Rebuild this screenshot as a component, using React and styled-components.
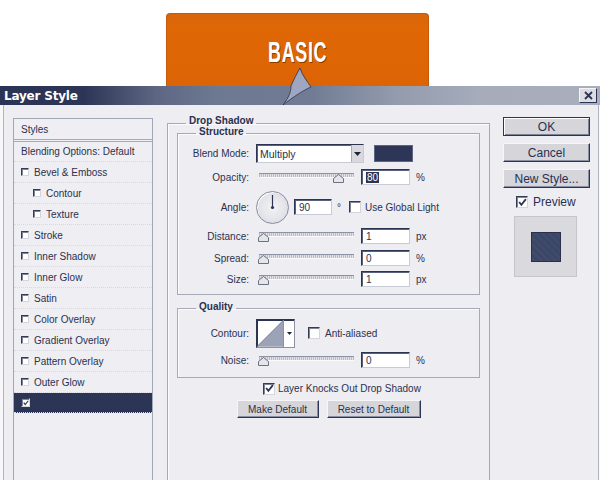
import React from 'react'
import styled, { createGlobalStyle } from 'styled-components'

const GlobalStyle = createGlobalStyle`
  html, body { margin: 0; padding: 0; background: #fff; }
  body { font-family: "Liberation Sans", Arial, sans-serif; color: #2a3150; }
  * { box-sizing: border-box; }
`

const layerItems = [
  { label: 'Bevel & Emboss' },
  { label: 'Contour', indent: true },
  { label: 'Texture', indent: true },
  { label: 'Stroke' },
  { label: 'Inner Shadow' },
  { label: 'Inner Glow' },
  { label: 'Satin' },
  { label: 'Color Overlay' },
  { label: 'Gradient Overlay' },
  { label: 'Pattern Overlay' },
  { label: 'Outer Glow' },
]

const Page = styled.div`
  position: relative;
  width: 600px;
  height: 480px;
  overflow: hidden;
`

const Header = styled.div`
  height: 86px;
  padding: 13px 0 0 166px;
`

const Tab = styled.div`
  width: 263px;
  height: 73px;
  border: 1px solid #c25a10;
  border-bottom: none;
  border-radius: 4px 4px 0 0;
  background: linear-gradient(180deg, #d9660c 0%, #df6705 18%, #dd6404 100%);
  display: flex;
  justify-content: center;
  padding-top: 24px;
`

const TabTitle = styled.span`
  display: inline-block;
  font-family: "Liberation Sans", Arial, sans-serif;
  font-weight: bold;
  font-size: 29px;
  line-height: 1;
  color: #fff;
  letter-spacing: 1px;
  transform: scaleX(0.62);
  text-shadow: 1px 1px 0 #8a3a00;
`

const Pointer = styled.svg`
  position: absolute;
  left: 280px;
  top: 64px;
`

const TitleBar = styled.div`
  height: 19px;
  display: flex;
  align-items: center;
  justify-content: space-between;
  padding: 0 3px 0 4px;
  background: linear-gradient(90deg, #2b3454 0%, #2c3555 14%, #5d6784 26%, #6d7891 36%, #717c94 52%, #939bad 66%, #a6acba 80%, #a9aebc 100%);
`

const Title = styled.span`
  color: #fff;
  font-weight: bold;
  font-size: 12px;
  font-family: "DejaVu Sans", "Liberation Sans", sans-serif;
  letter-spacing: -0.2px;
`

const CloseBox = styled.div`
  width: 18px;
  height: 15px;
  background: #dcdce2;
  border: 1px solid;
  border-color: #f4f4f6 #2b3454 #2b3454 #f4f4f6;
  display: flex;
  align-items: center;
  justify-content: center;
`

const Body = styled.div`
  display: flex;
  align-items: flex-start;
  height: 375px;
  overflow: hidden;
  padding: 12px 0 0 13px;
  background: #eeedf1;
  box-shadow: inset 3px 0 0 #f8f8fa, inset 4px 0 0 #b0b4c2, inset -1px 0 0 #fafafa, inset -2px 0 0 #b0b4c2;
`

const StylesPanel = styled.div`
  width: 140px;
  height: 380px;
  margin: 1px 14px 0 0;
  border: 1px solid #a2a7b6;
  background: #efeef2;
  font-size: 10px;
`

const PanelRow = styled.div`
  height: ${({ h }) => h || 21}px;
  display: flex;
  align-items: center;
  gap: 5px;
  padding-left: ${({ indent }) => (indent ? 19 : 7)}px;
  border-bottom: ${({ double }) => (double ? '3px double #a8acba' : '1px dotted #d8d8e0')};
  background: ${({ selected }) => (selected ? '#2d3556' : 'transparent')};
  color: #2a3150;
  white-space: nowrap;
`

const Box = styled.span`
  display: inline-flex;
  align-items: center;
  justify-content: center;
  flex: none;
  width: ${({ size }) => size}px;
  height: ${({ size }) => size}px;
  background: #fff;
  border: 1px solid;
  border-color: #343b52 #d4d4dc #d4d4dc #343b52;
  box-shadow: inset 1px 1px 0 #7d8498;
`

const Check = ({ size = 11, checked }) => (
  <Box size={size}>
    {checked && (
      <svg width={size - 3} height={size - 3} viewBox="0 0 8 8">
        <path d="M1 3.5 L3 6 L7 1" fill="none" stroke="#2b3454" strokeWidth="1.6" />
      </svg>
    )}
  </Box>
)

const Center = styled.div`
  width: 323px;
  flex: none;
`

const Group = styled.fieldset`
  margin: ${({ mt }) => mt || 0}px 0 0 0;
  padding: 0 ${({ px }) => px || 0}px ${({ pb }) => pb || 0}px;
  min-width: 0;
  height: ${({ h }) => (h ? `${h}px` : 'auto')};
  border: 1px solid #a6aab8;
  box-shadow: inset 1px 1px 0 #fbfbfd;
`

const Legend = styled.legend`
  margin-left: ${({ ml }) => ml}px;
  padding: 0 3px ${({ pb }) => pb || 2}px;
  font-size: 10px;
  font-weight: bold;
  line-height: 8px;
  color: #2a3150;
  white-space: nowrap;
`

const Row = styled.div`
  height: ${({ h }) => h}px;
  display: flex;
  align-items: center;
  font-size: 10px;
  padding-left: ${({ pl }) => pl || 0}px;
  white-space: nowrap;
`

const Label = styled.span`
  width: 71px;
  text-align: right;
  margin-right: 7px;
  color: #2a3150;
`

const Select = styled.div`
  width: 108px;
  height: 19px;
  display: flex;
  align-items: center;
  justify-content: space-between;
  background: #fff;
  border: 1px solid;
  border-color: #2c3454 #c8cad4 #c8cad4 #2c3454;
  box-shadow: inset 1px 1px 0 #59617c;
  padding-left: 3px;
  font-size: 10.5px;
`

const SelectArrow = styled.span`
  width: 12px;
  height: 17px;
  background: #d8d8dd;
  border-left: 1px solid #a8acba;
  display: flex;
  align-items: center;
  justify-content: center;
`

const Swatch = styled.div`
  width: 39px;
  height: 17px;
  margin-left: 10px;
  background: #2e3658;
  border: 1px solid #5c6480;
`

const Track = styled.div`
  position: relative;
  width: 95px;
  height: 4px;
  margin: -4px 0 0 3px;
  border-top: 1px solid #8d93a5;
  background: repeating-linear-gradient(90deg, #b8bcc8 0 1px, #e2e2e8 1px 2px);
  box-shadow: 0 1px 0 #fafafc;
`

const Thumb = styled.svg`
  position: absolute;
  top: 0px;
`

const Slider = ({ at = 0 }) => (
  <Track>
    <Thumb width="11" height="9" viewBox="0 0 11 9" style={{ left: at - 3 }}>
      <path d="M5.5 0.5 L10.5 4.5 L10.5 8.5 L0.5 8.5 L0.5 4.5 Z" fill="#e6e6ea" stroke="#6c7284" />
    </Thumb>
  </Track>
)

const Field = styled.div`
  width: ${({ w }) => w}px;
  height: 16px;
  margin-left: ${({ ml }) => ml}px;
  display: flex;
  align-items: center;
  padding-left: 4px;
  background: #fff;
  border: 1px solid;
  border-color: #2c3454 #c8cad4 #c8cad4 #2c3454;
  box-shadow: inset 1px 1px 0 #59617c;
  font-size: 10px;
  color: #2a3150;
`

const Highlight = styled.span`
  background: #2d3556;
  color: #fff;
  padding: 0 1px;
`

const Unit = styled.span`
  margin-left: ${({ ml }) => ml || 6}px;
  color: #2a3150;
`

const Dial = styled.div`
  position: relative;
  width: 33px;
  height: 33px;
  border-radius: 50%;
  border: 1px solid #878da0;
  background: radial-gradient(circle at 50% 50%, #f4f4f6 0%, #e2e2e8 60%, #d4d5dc 100%);
  box-shadow: inset 1px 1px 0 #fff;
`

const DialHand = styled.svg`
  position: absolute;
  left: 0;
  top: 0;
`

const CheckLabel = styled.span`
  margin-left: ${({ ml }) => ml || 4}px;
  display: inline-flex;
  align-items: center;
  gap: ${({ gap }) => gap || 4}px;
  color: #2a3150;
`

const ContourBox = styled.div`
  width: 39px;
  height: 29px;
  display: flex;
  border: 1px solid;
  border-color: #2c3454 #8c92a4 #8c92a4 #2c3454;
  box-shadow: inset 1px 1px 0 #2c3454;
  background: #fff;
`

const ContourArrow = styled.span`
  width: 11px;
  border-left: 1px solid #8c92a4;
  display: flex;
  align-items: center;
  justify-content: center;
`

const ButtonsRow = styled.div`
  display: flex;
  justify-content: center;
  gap: 8px;
  margin-top: 1px;
`

const Btn = styled.div`
  width: ${({ w }) => w}px;
  height: ${({ h }) => h || 18}px;
  display: flex;
  align-items: center;
  justify-content: center;
  background: #d5d5da;
  border: 1px solid;
  border-color: ${({ primary }) => (primary ? '#2b3454' : '#f6f6f8 #2b3454 #2b3454 #f6f6f8')};
  box-shadow: ${({ primary }) => (primary ? 'inset 1px 1px 0 #fff, inset -1px -1px 0 #7c8296' : 'inset -1px -1px 0 #8a90a4')};
  font-size: ${({ fs }) => fs || 10}px;
  color: #2a3150;
  white-space: nowrap;
`

const Side = styled.div`
  width: 87px;
  flex: none;
  margin-left: 13px;
  display: flex;
  flex-direction: column;
  gap: 7px;
`

const PreviewRow = styled.div`
  height: 20px;
  display: flex;
  align-items: center;
  gap: 5px;
  padding-left: 13px;
  margin-top: -3px;
  font-size: 12px;
  color: #2a3150;
`

const PreviewBox = styled.div`
  width: 63px;
  height: 61px;
  margin: -3px 0 0 11px;
  background: #d9d9de;
  border: 1px solid #c4c6ce;
  display: flex;
  align-items: center;
  justify-content: center;
`

const PreviewSwatch = styled.div`
  width: 30px;
  height: 30px;
  border: 1px solid #28304c;
  background: repeating-linear-gradient(45deg, #3c4a6c 0 2px, #4a4a66 2px 3px, #384668 3px 5px);
`

export default function App() {
  return (
    <Page>
      <GlobalStyle />
      <Header>
        <Tab>
          <TabTitle>BASIC</TabTitle>
        </Tab>
      </Header>
      <TitleBar>
        <Title>Layer Style</Title>
        <CloseBox>
          <svg width="9" height="9" viewBox="0 0 9 9">
            <path d="M1 1 L8 8 M8 1 L1 8" stroke="#2b3454" strokeWidth="1.8" />
          </svg>
        </CloseBox>
      </TitleBar>
      <Body>
        <StylesPanel>
          <PanelRow h={23} double>Styles</PanelRow>
          <PanelRow h={20}>Blending Options: Default</PanelRow>
          {layerItems.map((item) => (
            <PanelRow key={item.label} indent={item.indent}>
              <Check size={8} />
              {item.label}
            </PanelRow>
          ))}
          <PanelRow h={20} selected>
            <Check size={9} checked />
          </PanelRow>
        </StylesPanel>

        <Center>
          <Group px={9} h={420}>
            <Legend ml={9} pb={4}>Drop Shadow</Legend>
            <Group mt={-1} pb={4}>
              <Legend ml={18}>Structure</Legend>
              <Row h={5} />
              <Row h={21}>
                <Label>Blend Mode:</Label>
                <Select>
                  Multiply
                  <SelectArrow>
                    <svg width="7" height="4" viewBox="0 0 7 4"><path d="M0 0 H7 L3.5 4 Z" fill="#1c2238" /></svg>
                  </SelectArrow>
                </Select>
                <Swatch />
              </Row>
              <Row h={26}>
                <Label>Opacity:</Label>
                <Slider at={77} />
                <Field w={49} ml={7}><Highlight>80</Highlight></Field>
                <Unit>%</Unit>
              </Row>
              <Row h={34}>
                <Label>Angle:</Label>
                <Dial>
                  <DialHand width="31" height="31" viewBox="0 0 31 31">
                    <path d="M15.5 15.5 V3" stroke="#2b3454" strokeWidth="1.2" />
                    <circle cx="15.5" cy="15.5" r="1.6" fill="#2b3454" />
                  </DialHand>
                </Dial>
                <Field w={38} ml={5}>90</Field>
                <Unit ml={5}>°</Unit>
                <CheckLabel ml={8}>
                  <Check size={12} />
                  Use Global Light
                </CheckLabel>
              </Row>
              <Row h={24}>
                <Label>Distance:</Label>
                <Slider at={2} />
                <Field w={49} ml={7}>1</Field>
                <Unit>px</Unit>
              </Row>
              <Row h={20}>
                <Label>Spread:</Label>
                <Slider at={2} />
                <Field w={49} ml={7}>0</Field>
                <Unit>%</Unit>
              </Row>
              <Row h={22}>
                <Label>Size:</Label>
                <Slider at={2} />
                <Field w={49} ml={7}>1</Field>
                <Unit>px</Unit>
              </Row>
            </Group>

            <Group mt={8} pb={5}>
              <Legend ml={18}>Quality</Legend>
              <Row h={5} />
              <Row h={30}>
                <Label>Contour:</Label>
                <ContourBox>
                  <svg width="27" height="27" viewBox="0 0 27 27">
                    <path d="M0 27 L27 0 L27 27 Z" fill="#9da3b6" />
                    <path d="M0 27 L27 0" stroke="#6f7690" strokeWidth="1" />
                  </svg>
                  <ContourArrow>
                    <svg width="5" height="3" viewBox="0 0 5 3"><path d="M0 0 H5 L2.5 3 Z" fill="#1c2238" /></svg>
                  </ContourArrow>
                </ContourBox>
                <CheckLabel ml={13} gap={5}>
                  <Check size={12} />
                  Anti-aliased
                </CheckLabel>
              </Row>
              <Row h={24}>
                <Label>Noise:</Label>
                <Slider at={2} />
                <Field w={49} ml={7}>0</Field>
                <Unit>%</Unit>
              </Row>
            </Group>

            <Row h={21} pl={82}>
              <CheckLabel ml={0} gap={3}>
                <Check size={12} checked />
                Layer Knocks Out Drop Shadow
              </CheckLabel>
            </Row>
            <ButtonsRow>
              <Btn w={82}>Make Default</Btn>
              <Btn w={94}>Reset to Default</Btn>
            </ButtonsRow>
          </Group>
        </Center>

        <Side>
          <Btn w={87} h={19} fs={12} primary>OK</Btn>
          <Btn w={87} h={19} fs={12}>Cancel</Btn>
          <Btn w={87} h={19} fs={12}>New Style...</Btn>
          <PreviewRow>
            <Check size={12} checked />
            Preview
          </PreviewRow>
          <PreviewBox>
            <PreviewSwatch />
          </PreviewBox>
        </Side>
      </Body>

      <Pointer width="36" height="44" viewBox="0 0 36 44">
        <path
          d="M20 4 C22 11 27 17 31 23 C24 26 13 33 3 41 C9 33 11 28 11 22 C14 15 17 9 20 4 Z"
          fill="#9ea7bf"
          stroke="#2b3454"
          strokeWidth="0.8"
        />
      </Pointer>
    </Page>
  )
}
